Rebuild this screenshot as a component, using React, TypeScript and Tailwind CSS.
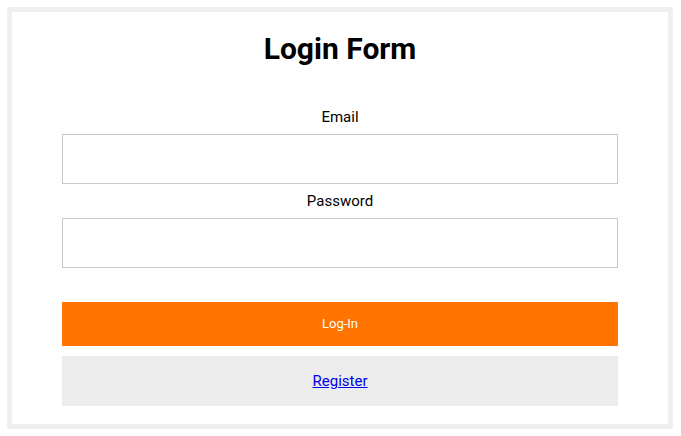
import React from "react";

export default function App() {
  return (
    <div className="w-[681px] h-[436px] bg-white pt-[7px] pl-[7px]" style={{ fontFamily: "Roboto, 'Liberation Sans', sans-serif" }}>
      <div className="w-[666px] h-[422px] border-[5px] border-[#efefef] bg-white px-[50px] pt-[20px]">
        <h1 className="text-[30px] leading-[34px] font-bold text-black text-center">Login Form</h1>
        <div className="mt-[42px] flex flex-col">
          <label className="text-[15px] leading-[18px] h-[18px] text-black text-center">Email</label>
          <input className="mt-[8px] h-[50px] w-full border border-[#c8c8c8] outline-none px-2" type="email" />
          <label className="mt-[8px] text-[15px] leading-[18px] h-[18px] text-black text-center">Password</label>
          <input className="mt-[8px] h-[50px] w-full border border-[#c8c8c8] outline-none px-2" type="password" />
          <button className="mt-[34px] h-[44px] w-full bg-[#ff7300] text-white text-[13px] flex items-center justify-center">Log-In</button>
          <div className="mt-[10px] h-[50px] w-full bg-[#ececec] flex items-center justify-center">
            <a href="#" className="text-[15px] text-[#0000ee] underline">Register</a>
          </div>
        </div>
      </div>
    </div>
  );
}
